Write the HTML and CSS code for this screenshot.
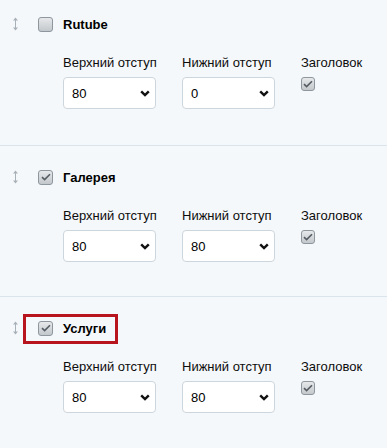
FILE: index.html
```html
<!DOCTYPE html>
<html lang="ru">
<head>
    <meta charset="UTF-8">
    <meta name="viewport" content="width=device-width, initial-scale=1.0">
    <title>Блоки страницы</title>
    <link rel="stylesheet" href="styles.css">
</head>
<body>
    <div class="blocks">
        <div class="block first">
            <div class="block-head">
                <span class="drag"><svg width="5" height="14" viewBox="0 0 5 14"><path d="M2.5 2v10" stroke="#a9b1b8" stroke-width="1"/><path d="M0 3.5L2.5 0.5 5 3.5zM0 10.5l2.5 3 2.5-3z" fill="#a9b1b8"/></svg></span>
                <span class="head-label">
                    <span class="cb"></span>
                    <span class="title">Rutube</span>
                </span>
            </div>
            <div class="fields">
                <div class="field">
                    <label>Верхний отступ</label>
                    <div class="select"><span>80</span><svg width="10" height="7" viewBox="0 0 10 7"><path d="M1.2 1.3l3.8 3.8 3.8-3.8" fill="none" stroke="#111" stroke-width="2.4"/></svg></div>
                </div>
                <div class="field">
                    <label>Нижний отступ</label>
                    <div class="select"><span>0</span><svg width="10" height="7" viewBox="0 0 10 7"><path d="M1.2 1.3l3.8 3.8 3.8-3.8" fill="none" stroke="#111" stroke-width="2.4"/></svg></div>
                </div>
                <div class="field">
                    <label>Заголовок</label>
                    <span class="cb small checked"><svg width="10" height="8" viewBox="0 0 10 8"><path d="M1 4.2l2.6 2.4L9 1.2" fill="none" stroke="#555c63" stroke-width="1.6"/></svg></span>
                </div>
            </div>
        </div>

        <div class="block">
            <div class="block-head">
                <span class="drag"><svg width="5" height="14" viewBox="0 0 5 14"><path d="M2.5 2v10" stroke="#a9b1b8" stroke-width="1"/><path d="M0 3.5L2.5 0.5 5 3.5zM0 10.5l2.5 3 2.5-3z" fill="#a9b1b8"/></svg></span>
                <span class="head-label">
                    <span class="cb checked"><svg width="10" height="8" viewBox="0 0 10 8"><path d="M1 4.2l2.6 2.4L9 1.2" fill="none" stroke="#555c63" stroke-width="1.6"/></svg></span>
                    <span class="title">Галерея</span>
                </span>
            </div>
            <div class="fields">
                <div class="field">
                    <label>Верхний отступ</label>
                    <div class="select"><span>80</span><svg width="10" height="7" viewBox="0 0 10 7"><path d="M1.2 1.3l3.8 3.8 3.8-3.8" fill="none" stroke="#111" stroke-width="2.4"/></svg></div>
                </div>
                <div class="field">
                    <label>Нижний отступ</label>
                    <div class="select"><span>80</span><svg width="10" height="7" viewBox="0 0 10 7"><path d="M1.2 1.3l3.8 3.8 3.8-3.8" fill="none" stroke="#111" stroke-width="2.4"/></svg></div>
                </div>
                <div class="field">
                    <label>Заголовок</label>
                    <span class="cb small checked"><svg width="10" height="8" viewBox="0 0 10 8"><path d="M1 4.2l2.6 2.4L9 1.2" fill="none" stroke="#555c63" stroke-width="1.6"/></svg></span>
                </div>
            </div>
        </div>

        <div class="block">
            <div class="block-head">
                <span class="drag"><svg width="5" height="14" viewBox="0 0 5 14"><path d="M2.5 2v10" stroke="#a9b1b8" stroke-width="1"/><path d="M0 3.5L2.5 0.5 5 3.5zM0 10.5l2.5 3 2.5-3z" fill="#a9b1b8"/></svg></span>
                <span class="head-label marked">
                    <span class="cb checked"><svg width="10" height="8" viewBox="0 0 10 8"><path d="M1 4.2l2.6 2.4L9 1.2" fill="none" stroke="#555c63" stroke-width="1.6"/></svg></span>
                    <span class="title">Услуги</span>
                </span>
            </div>
            <div class="fields">
                <div class="field">
                    <label>Верхний отступ</label>
                    <div class="select"><span>80</span><svg width="10" height="7" viewBox="0 0 10 7"><path d="M1.2 1.3l3.8 3.8 3.8-3.8" fill="none" stroke="#111" stroke-width="2.4"/></svg></div>
                </div>
                <div class="field">
                    <label>Нижний отступ</label>
                    <div class="select"><span>80</span><svg width="10" height="7" viewBox="0 0 10 7"><path d="M1.2 1.3l3.8 3.8 3.8-3.8" fill="none" stroke="#111" stroke-width="2.4"/></svg></div>
                </div>
                <div class="field">
                    <label>Заголовок</label>
                    <span class="cb small checked"><svg width="10" height="8" viewBox="0 0 10 8"><path d="M1 4.2l2.6 2.4L9 1.2" fill="none" stroke="#555c63" stroke-width="1.6"/></svg></span>
                </div>
            </div>
        </div>
    </div>
</body>
</html>
```

FILE: styles.css
```css
body {
    font-family: 'Liberation Sans', Arial, sans-serif;
    font-size: 13px;
    color: #111;
    background-color: #f5f8fa;
    margin: 0;
    padding: 0;
}

.block {
    border-top: 1px solid #dbe4ea;
    padding: 23px 0 34px 13px;
}

.block.first {
    border-top: none;
    padding-top: 16px;
    padding-bottom: 36px;
}

.block-head {
    display: flex;
    align-items: center;
    height: 16px;
}

.drag {
    display: flex;
    width: 5px;
    height: 14px;
}

.head-label {
    position: relative;
    display: flex;
    align-items: center;
    margin-left: 20px;
}

.head-label.marked::after {
    content: "";
    position: absolute;
    left: -15px;
    right: -12px;
    top: -7px;
    bottom: -8px;
    border: 3px solid #b8141d;
}

.title {
    font-weight: 700;
    margin-left: 10px;
    color: #000;
}

.cb {
    display: flex;
    align-items: center;
    justify-content: center;
    box-sizing: border-box;
    width: 15px;
    height: 15px;
    border: 1px solid #8e979e;
    border-radius: 3px;
    background: linear-gradient(#e6e8ea, #c3c8cc);
}

.cb.small {
    width: 14px;
    height: 14px;
}

.fields {
    display: flex;
    padding-left: 50px;
    margin-top: 23px;
}

.field {
    flex: 0 0 119px;
}

.field:last-child {
    flex: 0 0 auto;
}

.field label {
    display: block;
    line-height: 15px;
    margin-bottom: 7px;
    color: #0d0d0d;
}

.select {
    display: flex;
    align-items: center;
    justify-content: space-between;
    box-sizing: border-box;
    width: 93px;
    height: 32px;
    padding: 0 5px 0 8px;
    background: #fff;
    border: 1px solid #cdd6dc;
    border-radius: 4px;
    font-size: 13px;
    color: #000;
}

.select svg {
    margin-top: 1px;
}
```
